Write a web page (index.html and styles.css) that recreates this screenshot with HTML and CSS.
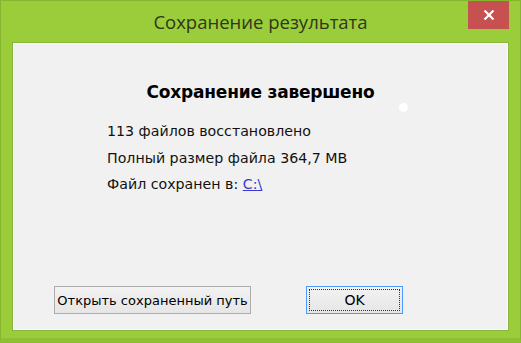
FILE: index.html
```html
<!DOCTYPE html>
<html lang="ru">
<head>
<meta charset="utf-8">
<title>Сохранение результата</title>
<link rel="stylesheet" href="styles.css">
</head>
<body>
<div class="window">
  <div class="titlebar">
    <div class="spacer"></div>
    <div class="title">Сохранение результата</div>
    <div class="close-wrap"><div class="close"><svg width="12" height="10" viewBox="0 0 12 10"><path d="M1.5 0.5 L10.5 9.5 M10.5 0.5 L1.5 9.5" stroke="#fff" stroke-width="2.2" fill="none"/></svg></div></div>
  </div>
  <div class="content">
    <div class="dot"></div>
    <h1 class="heading">Сохранение завершено</h1>
    <div class="info">
      <div class="line">113 файлов восстановлено</div>
      <div class="line">Полный размер файла 364,7 MB</div>
      <div class="line">Файл сохранен в: <a class="link" href="#">C:\</a></div>
    </div>
    <div class="buttons">
      <button class="btn btn-open">Открыть сохраненный путь</button>
      <button class="btn btn-ok"><span class="focus">OK</span></button>
    </div>
  </div>
</div>
</body>
</html>
```
FILE: styles.css
```css
html, body {
  margin: 0;
  padding: 0;
}
body {
  width: 521px;
  height: 343px;
  overflow: hidden;
  background: #9bcb3c;
}
.window {
  box-sizing: border-box;
  width: 521px;
  height: 343px;
  background: #9bcd3a;
  border: 1px solid #87b52f;
  border-bottom: 5px solid #8fc034;
  display: flex;
  flex-direction: column;
  padding: 0 11px 7px 11px;
}
.titlebar {
  height: 41px;
  display: grid;
  grid-template-columns: 1fr auto 1fr;
  align-items: start;
}
.title {
  font-family: "Open Sans", "Noto Sans", sans-serif;
  font-size: 18.5px;
  color: #2f361c;
  padding-top: 8px;
}
.close-wrap {
  display: flex;
  justify-content: flex-end;
}
.close {
  width: 41px;
  height: 28px;
  background: #c75050;
  display: flex;
  align-items: center;
  justify-content: center;
}
.content {
  position: relative;
  flex: 1;
  background: #f1f1f1;
  border: 1px solid #86b63a;
  box-shadow: inset 0 0 0 1px #fbfbfb;
  display: flex;
  flex-direction: column;
  font-family: "DejaVu Sans", Verdana, sans-serif;
}
.dot {
  position: absolute;
  left: 386px;
  top: 60px;
  width: 9px;
  height: 9px;
  border-radius: 50%;
  background: #fff;
}
.heading {
  margin: 39px 0 0 0;
  text-align: center;
  font-size: 17px;
  font-weight: bold;
  color: #000;
  letter-spacing: -0.2px;
}
.info {
  margin: 16px 0 0 94px;
  font-size: 14.2px;
  color: #111;
}
.line {
  height: 26.5px;
  line-height: 26px;
}
.link {
  color: #3a3ad0;
  text-decoration: underline;
}
.buttons {
  display: flex;
  margin: auto 0 16px 41px;
  gap: 55px;
}
.btn {
  box-sizing: border-box;
  height: 28px;
  font-family: "DejaVu Sans", Verdana, sans-serif;
  font-size: 13px;
  color: #000;
  background: linear-gradient(#f2f2f2, #e6e6e6);
  border: 1px solid #adadad;
  padding: 0;
  margin: 0;
}
.btn-open {
  width: 197px;
}
.btn-ok {
  width: 97px;
  border: 1px solid #4d9bf8;
  padding: 2px;
  font-size: 14px;
}
.focus {
  box-sizing: border-box;
  display: flex;
  align-items: center;
  justify-content: center;
  width: 100%;
  height: 100%;
  border: 1px dotted #333;
}
```
